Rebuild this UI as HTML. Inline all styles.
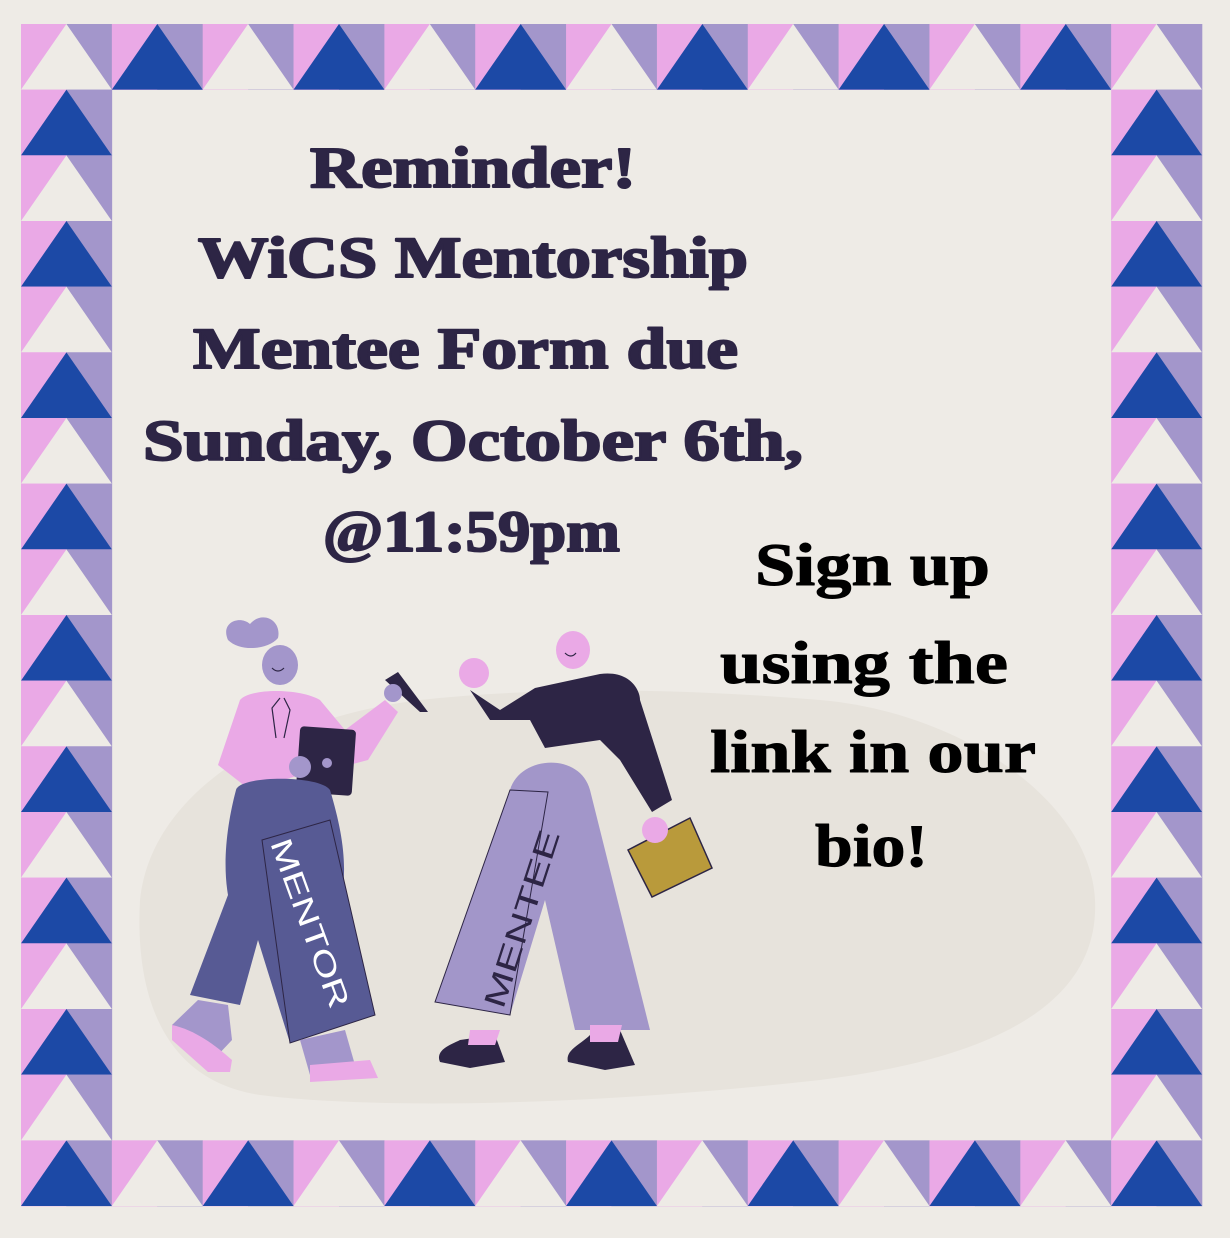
<!DOCTYPE html>
<html><head><meta charset="utf-8"><style>
html,body{margin:0;padding:0;background:#eeebe6;}
svg{display:block}
</style></head><body>
<svg id="s" width="1230" height="1238" viewBox="0 0 1230 1238" xmlns="http://www.w3.org/2000/svg">
<rect width="1230" height="1238" fill="#eeebe6"/>
<g id="border"></g>
<path d="M140 900 C150 800 260 720 420 700 C560 685 700 690 820 700 C960 712 1090 800 1095 900 C1100 1010 980 1060 820 1080 C600 1105 380 1110 260 1095 C160 1080 135 990 140 900 Z" fill="#e7e3dc"/>
<g>
 <path d="M228 640 C220 622 240 615 250 624 C262 610 282 620 278 638 C268 650 240 652 228 640Z" fill="#a396cb"/>
 <ellipse cx="280" cy="665" rx="18" ry="20" fill="#a396cb"/>
 <path d="M272 668 q6 6 12 0" stroke="#2d2545" stroke-width="1.2" fill="none"/>
 <path d="M240 700 C250 688 300 688 320 700 L345 730 L385 700 L398 712 L368 760 L330 770 L250 780 L235 770 Z" fill="#eaa9e6"/>
 <path d="M240 700 L218 765 L250 790 L300 775 L300 760 L260 760 L258 720Z" fill="#eaa9e6"/>
 <path d="M280 698 l-8 10 l4 30 M284 698 l6 12 l-6 28" stroke="#2d2545" stroke-width="1.2" fill="none"/>
 <rect x="298" y="728" width="56" height="66" rx="4" fill="#2d2545" transform="rotate(4 326 760)"/>
 <circle cx="300" cy="767" r="11" fill="#a396cb"/>
 <circle cx="327" cy="763" r="5" fill="#a396cb"/>
 <path d="M385 680 L398 672 L428 712 L420 712Z" fill="#2d2545"/>
 <circle cx="393" cy="693" r="9" fill="#a396cb"/>
 <path d="M236 790 C240 775 320 775 330 790 C345 840 350 880 335 920 L375 1015 L290 1043 L258 940 L240 1005 L190 995 L228 895 C222 860 228 820 236 790Z" fill="#575a94"/>
 <path d="M262 840 L330 820 L375 1015 L290 1043 Z" fill="#575a94" stroke="#2d2545" stroke-width="1"/>
 <text x="0" y="0" transform="translate(270 843) rotate(70)" font-family="Liberation Sans, sans-serif" font-size="30" fill="#fff" textLength="178" lengthAdjust="spacingAndGlyphs">MENTOR</text>
 <path d="M198 1000 L228 1005 L232 1040 L215 1058 L175 1040 L172 1025Z" fill="#a396cb"/>
 <path d="M172 1025 C195 1030 215 1045 232 1060 L230 1072 L208 1072 L172 1040Z" fill="#eaa9e6"/>
 <path d="M300 1040 L345 1030 L355 1065 L310 1075Z" fill="#a396cb"/>
 <path d="M310 1065 L370 1060 L378 1078 L310 1082Z" fill="#eaa9e6"/>
</g>
<g>
 <ellipse cx="573" cy="650" rx="17" ry="19" fill="#eaa9e6"/>
 <path d="M565 653 q6 6 11 0" stroke="#2d2545" stroke-width="1.2" fill="none"/>
 <circle cx="474" cy="673" r="15" fill="#eaa9e6"/>
 <path d="M470 690 L500 710 L535 688 L600 674 C630 670 640 690 640 700 L672 800 L652 812 L620 760 L600 740 L545 748 L530 720 L490 720 Z" fill="#2d2545"/>
 <path d="M510 790 C520 755 580 752 590 790 L650 1030 L575 1030 L545 900 L510 1015 L435 1002 Z" fill="#a296c9"/>
 <path d="M510 790 L548 792 L510 1015 L435 1002Z" fill="#a296c9" stroke="#2d2545" stroke-width="1"/>
 <text x="0" y="0" transform="translate(503 1010) rotate(-72)" font-family="Liberation Sans, sans-serif" font-size="30" fill="#2d2545" textLength="185" lengthAdjust="spacingAndGlyphs">MENTEE</text>
 <path d="M628 850 L690 818 L712 868 L652 897 Z" fill="#b99a3b" stroke="#2d2545" stroke-width="1.5"/>
 <circle cx="655" cy="830" r="13" fill="#eaa9e6"/>
 <path d="M460 1040 L495 1035 L505 1062 L470 1068 L440 1062 C435 1050 450 1045 460 1040Z" fill="#2d2545"/>
 <path d="M590 1035 L620 1030 L635 1065 L605 1070 L568 1062 C565 1050 580 1045 590 1035Z" fill="#2d2545"/>
 <path d="M470 1030 L500 1030 L495 1045 L468 1045Z" fill="#eaa9e6"/>
 <path d="M590 1025 L622 1025 L618 1042 L590 1042Z" fill="#eaa9e6"/>
</g>
<g font-family="Liberation Serif, serif" font-weight="bold" font-size="58" fill="#2d2545" stroke="#2d2545" stroke-width="2" stroke-linejoin="round">
 <text x="310" y="187" textLength="326" lengthAdjust="spacingAndGlyphs">Reminder!</text>
 <text x="198" y="277" textLength="550" lengthAdjust="spacingAndGlyphs">WiCS Mentorship</text>
 <text x="193" y="368" textLength="545" lengthAdjust="spacingAndGlyphs">Mentee Form due</text>
 <text x="143" y="460" textLength="660" lengthAdjust="spacingAndGlyphs">Sunday, October 6th,</text>
 <text x="323" y="551" textLength="297" lengthAdjust="spacingAndGlyphs">@11:59pm</text>
</g>
<g font-family="Liberation Serif, serif" font-weight="bold" font-size="60" fill="#000" stroke="#000" stroke-width="1" stroke-linejoin="round">
 <text x="755" y="585" textLength="235" lengthAdjust="spacingAndGlyphs">Sign up</text>
 <text x="720" y="683" textLength="288" lengthAdjust="spacingAndGlyphs">using the</text>
 <text x="710" y="772" textLength="326" lengthAdjust="spacingAndGlyphs">link in our</text>
 <text x="815" y="866" textLength="113" lengthAdjust="spacingAndGlyphs">bio!</text>
</g>
</svg>
<script>
(function(){
var g=document.getElementById('border');
var x0=21,y0=24,W=(1202-21)/13,H=(1206-24)/18,out='';
function tile(i,j){
 var x=x0+i*W,y=y0+j*H,m=x+W/2;
 var c=((i+j)%2)?'#1c49a6':'#eeebe6';
 out+='<rect x="'+x+'" y="'+y+'" width="'+(W/2+0.5)+'" height="'+(H+0.3)+'" fill="#eaa9e6"/>';
 out+='<rect x="'+m+'" y="'+y+'" width="'+(W/2+0.3)+'" height="'+(H+0.3)+'" fill="#a396cb"/>';
 out+='<polygon points="'+m+','+y+' '+(x+W)+','+(y+H)+' '+x+','+(y+H)+'" fill="'+c+'"/>';
}
for(var i=0;i<13;i++){tile(i,0);tile(i,17);}
for(var j=1;j<17;j++){tile(0,j);tile(12,j);}
g.innerHTML=out;
})();
</script>
</body></html>
